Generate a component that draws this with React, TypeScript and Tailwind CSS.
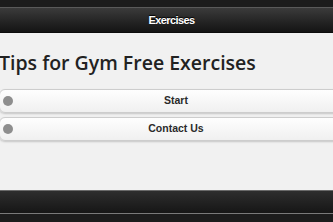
const BUTTONS = ["Start", "Contact Us"];

export default function App() {
  return (
    <div
      className="w-[333px] h-[222px] overflow-hidden flex flex-col bg-[#1e1e1e]"
      style={{ fontFamily: "'Liberation Sans', Arial, sans-serif" }}
    >
      {/* top strip */}
      <div className="h-[7px] bg-[#1c1c1c] shrink-0" />

      {/* header bar */}
      <div className="h-[26px] shrink-0 border-t border-[#5a5a5a] border-b border-b-[#0d0d0d] bg-gradient-to-b from-[#3b3b3b] to-[#141414] flex items-center justify-center">
        <span className="text-[11px] font-bold tracking-[-0.6px] text-white [text-shadow:0_-1px_1px_#000] ml-[10px]">
          Exercises
        </span>
      </div>

      {/* content */}
      <div className="flex-1 bg-[#f1f1f1] flex flex-col">
        <h1
          className="text-[19.5px] font-semibold text-[#222] leading-none mt-[20px] -ml-[1px] whitespace-nowrap"
          style={{ fontFamily: "'Open Sans', sans-serif" }}
        >
          Tips for Gym Free Exercises
        </h1>
        <div className="flex flex-col gap-[4px] mt-[16px] -ml-[1px] w-[354px]">
          {BUTTONS.map((label) => (
            <button
              key={label}
              className="relative h-[24px] rounded-[6px] border border-[#cdcdcd] bg-gradient-to-b from-[#fefefe] to-[#f0f0f0] shadow-[0_1px_2px_rgba(0,0,0,0.18)] flex items-center justify-center"
            >
              <span className="absolute left-[3px] top-1/2 -translate-y-1/2 w-[10px] h-[10px] rounded-full bg-[#8e8e8e]" />
              <span className="text-[10.5px] font-bold text-[#2a2a2a]">{label}</span>
            </button>
          ))}
        </div>
      </div>

      {/* footer */}
      <div className="h-[24px] shrink-0 border-t border-[#6a6a6a] border-b border-b-[#7a7a7a] bg-gradient-to-b from-[#2e2e2e] to-[#161616]" />
      <div className="h-[8px] shrink-0 bg-[#1c1c1c]" />
    </div>
  );
}
